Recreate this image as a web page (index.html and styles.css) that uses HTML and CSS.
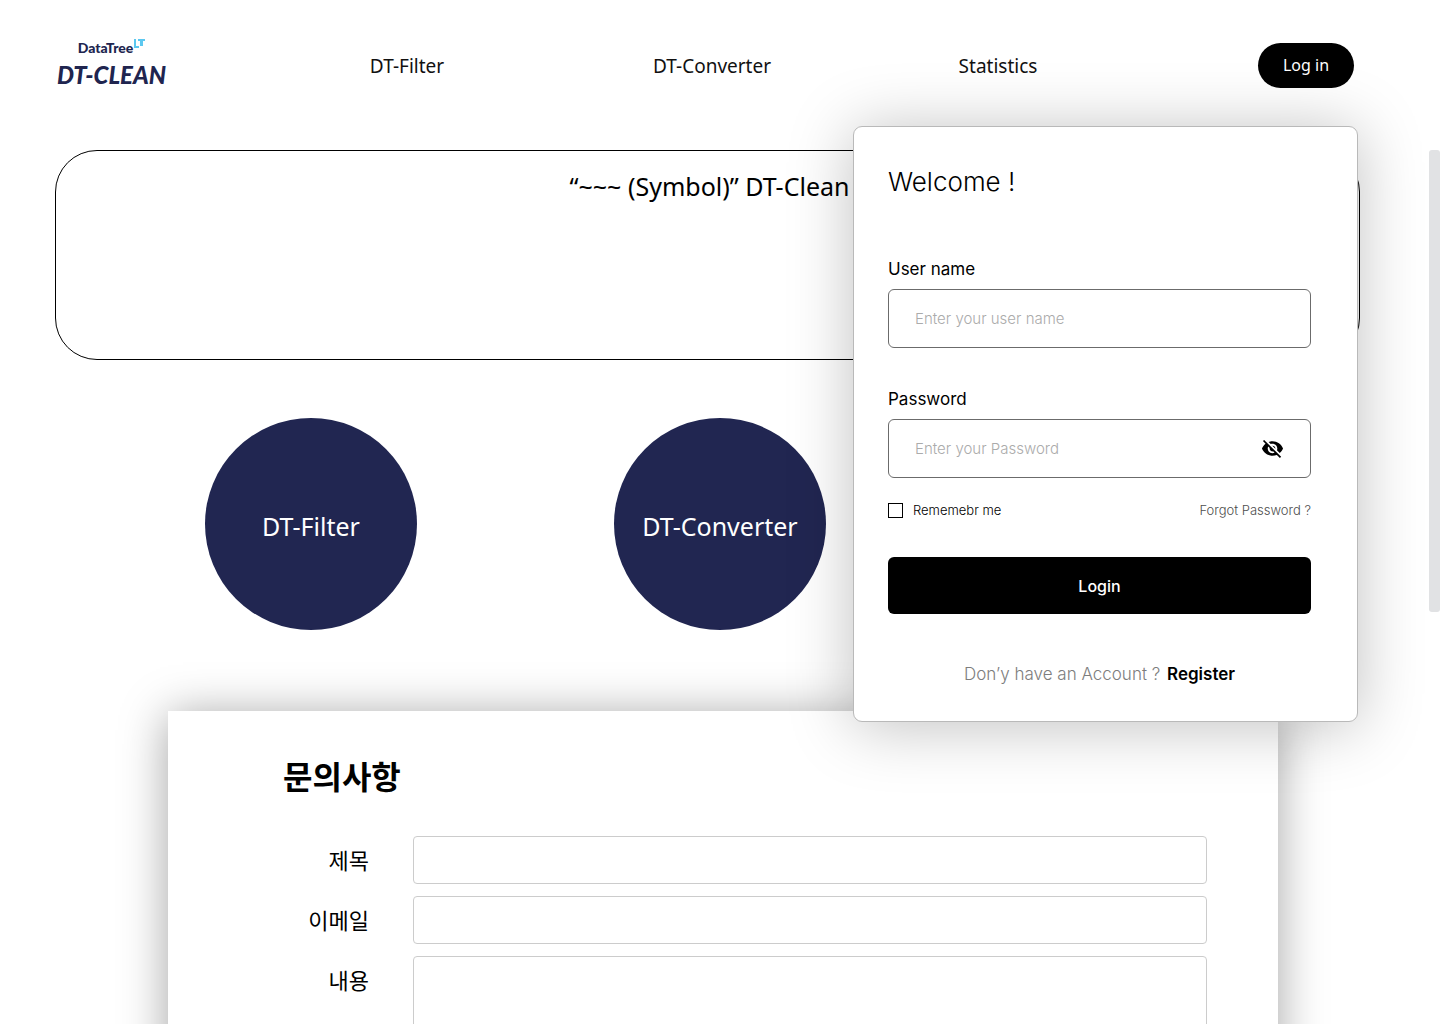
FILE: index.html
```html
<!DOCTYPE html>
<html lang="ko">
<head>
<meta charset="utf-8">
<meta name="viewport" content="width=device-width, initial-scale=1">
<title>DT-Clean</title>
<link rel="stylesheet" href="styles.css">
</head>
<body>
<div class="page">
  <header class="header">
    <a class="logo" href="#">
      <span class="logo-top">DataTree<svg class="logo-mark" width="11" height="10" viewBox="0 0 11 10" aria-hidden="true"><g fill="#5cc8f0"><rect x="0" y="0" width="2" height="9"/><rect x="0" y="7" width="5" height="2"/><rect x="4" y="0" width="7" height="2"/><rect x="6" y="0" width="3" height="7"/></g></svg></span>
      <span class="logo-name">DT-CLEAN</span>
    </a>
    <nav class="nav">
      <a href="#">DT-Filter</a>
      <a href="#">DT-Converter</a>
      <a href="#">Statistics</a>
    </nav>
    <button class="login-pill" type="button">Log in</button>
  </header>

  <main>
    <section class="hero"><h1>“~~~ (Symbol)” DT-Clean</h1></section>

    <section class="services">
      <a class="service" href="#">DT-Filter</a>
      <a class="service" href="#">DT-Converter</a>
    </section>

    <form class="inquiry">
      <h2>문의사항</h2>
      <div class="inquiry-row">
        <label for="subject">제목</label>
        <input id="subject" type="text">
      </div>
      <div class="inquiry-row">
        <label for="email">이메일</label>
        <input id="email" type="email">
      </div>
      <div class="inquiry-row">
        <label for="body">내용</label>
        <textarea id="body" rows="8"></textarea>
      </div>
    </form>
  </main>

  <form class="modal">
    <h2>Welcome !</h2>
    <label class="field-label" for="user">User name</label>
    <div class="field">
      <input id="user" type="text" placeholder="Enter your user name">
    </div>
    <label class="field-label" for="password">Password</label>
    <div class="field">
      <input id="password" type="password" placeholder="Enter your Password">
      <button class="reveal" type="button" aria-label="Show password">
        <svg width="23" height="23" viewBox="0 0 24 24" fill="#000"><path d="M12 7c2.760 0 5 2.240 5 5 0 .65-.13 1.260-.36 1.830l2.920 2.920c1.510-1.260 2.700-2.890 3.430-4.750-1.730-4.390-6-7.500-11-7.500-1.400 0-2.740.25-3.980.7l2.160 2.160C10.740 7.130 11.350 7 12 7zM2 4.270l2.280 2.280.46.46C3.080 8.300 1.780 10.020 1 12c1.730 4.390 6 7.500 11 7.500 1.550 0 3.030-.3 4.380-.84l.42.42L19.730 22 21 20.730 3.270 3 2 4.270zM7.530 9.800l1.550 1.550c-.05.21-.08.43-.08.65 0 1.660 1.340 3 3 3 .22 0 .44-.03.65-.08l1.550 1.550c-.67.33-1.410.53-2.200.53-2.760 0-5-2.240-5-5 0-.79.2-1.530.53-2.200zm4.310-.78l3.150 3.150.02-.16c0-1.660-1.340-3-3-3l-.17.01z"/></svg>
      </button>
    </div>
    <div class="options">
      <label class="remember"><input type="checkbox">Rememebr me</label>
      <a href="#">Forgot Password ?</a>
    </div>
    <button class="submit" type="submit">Login</button>
    <p class="register">Don’y have an Account ? <a href="#">Register</a></p>
  </form>

  <div class="scroll-thumb"></div>
</div>
</body>
</html>
```
FILE: styles.css
```css
* {
  box-sizing: border-box;
}

body {
  margin: 0;
  background: #fff;
  color: #000;
  font-family: "Noto Sans", "Noto Sans CJK KR", sans-serif;
}

a {
  color: inherit;
  text-decoration: none;
}

h1,
h2,
p {
  margin: 0;
}

button,
input,
textarea {
  font: inherit;
}

button {
  border: 0;
  cursor: pointer;
}

.page {
  position: relative;
  height: 100vh;
  overflow: hidden;
}

/* Header */
.header {
  display: flex;
  align-items: center;
  padding: 38px 86px 0 55px;
}

.logo {
  display: flex;
  flex-direction: column;
  align-items: center;
  width: 113px;
  color: #20254f;
}

.logo-top {
  display: flex;
  font: 900 14px/20px Lato, sans-serif;
}

.logo-mark {
  margin: 1px 0 0 1px;
}

.logo-name {
  font: italic 900 24px/34px Lato, sans-serif;
  white-space: nowrap;
}

.nav {
  flex: 1;
  display: grid;
  grid-template-columns: 304fr 306fr 266fr;
  margin: 0 127px 0 87px;
  padding-top: 2px;
  color: #111;
  font-size: 19px;
  line-height: 28px;
  text-align: center;
}

.login-pill {
  width: 96px;
  height: 45px;
  padding: 0;
  border-radius: 23px;
  background: #000;
  color: #fff;
  font-size: 16px;
}

/* Hero */
.hero {
  height: 210px;
  margin: 58px 80px 0 55px;
  padding: 17px 0 0 4px;
  border: 1px solid #000;
  border-radius: 42px;
  text-align: center;
}

.hero h1 {
  font-size: 25px;
  font-weight: 400;
  line-height: 36px;
}

/* Service circles */
.services {
  display: grid;
  grid-template-columns: repeat(3, 212px);
  justify-content: space-between;
  padding: 58px 205px 0;
}

.service {
  display: flex;
  align-items: center;
  justify-content: center;
  height: 212px;
  padding-top: 4px;
  border-radius: 50%;
  background: #212651;
  color: #fff;
  font-size: 25px;
}

/* Inquiry form */
.inquiry {
  display: flex;
  flex-direction: column;
  gap: 12px;
  margin: 81px 162px 0 168px;
  padding: 40px 71px 60px 115px;
  background: #fff;
  box-shadow: 0 4px 44px rgba(0, 0, 0, 0.36);
  font-family: "Noto Sans CJK KR", sans-serif;
}

.inquiry h2 {
  margin-bottom: 25px;
  font-size: 32px;
  font-weight: 700;
  line-height: 48px;
}

.inquiry-row {
  display: grid;
  grid-template-columns: 86px 1fr;
  column-gap: 44px;
}

.inquiry-row label {
  font-size: 22px;
  line-height: 46px;
  text-align: right;
}

.inquiry-row input,
.inquiry-row textarea {
  width: 100%;
  min-height: 48px;
  padding: 0 16px;
  border: 1px solid #ccc;
  border-radius: 4px;
  background: #fff;
  resize: none;
}

/* Login dialog */
.modal {
  position: absolute;
  top: 126px;
  right: 82px;
  display: flex;
  flex-direction: column;
  width: 505px;
  padding: 35px 46px 35px 34px;
  border: 1px solid #b9b9b9;
  border-radius: 9px;
  background: #fff;
  box-shadow: 0 4px 64px rgba(0, 0, 0, 0.25);
  font-family: Inter, sans-serif;
}

.modal h2 {
  margin-bottom: 55px;
  font-size: 26px;
  font-weight: 300;
  line-height: 40px;
}

.field-label {
  margin-bottom: 8px;
  font-size: 17px;
  line-height: 24px;
}

.field {
  display: flex;
  align-items: center;
  height: 59px;
  margin-bottom: 39px;
  padding: 0 26px;
  border: 1px solid #6b6b6b;
  border-radius: 6px;
}

.field input {
  flex: 1;
  min-width: 0;
  padding: 0;
  border: 0;
  outline: 0;
  background: none;
  font-size: 15px;
  font-weight: 300;
}

.field input::placeholder {
  color: #ababab;
  opacity: 1;
}

.reveal {
  display: flex;
  padding: 0;
  background: none;
}

.options {
  display: flex;
  align-items: center;
  justify-content: space-between;
  margin-top: -17px;
  font-size: 13px;
  font-weight: 300;
  line-height: 20px;
}

.options a {
  color: #4d4d4d;
}

.remember {
  display: flex;
  align-items: center;
  gap: 10px;
}

.remember input {
  appearance: none;
  width: 15px;
  height: 15px;
  margin: 0;
  border: 1px solid #000;
}

.submit {
  height: 57px;
  margin: 37px 0 48px;
  border-radius: 6px;
  background: #000;
  color: #fff;
  font-size: 16px;
  font-weight: 500;
}

.register {
  color: #7d7d7d;
  font-size: 17px;
  font-weight: 300;
  line-height: 24px;
  text-align: center;
}

.register a {
  margin-left: 2px;
  color: #000;
  font-weight: 600;
}

.scroll-thumb {
  position: absolute;
  top: 150px;
  right: 0;
  width: 11px;
  height: 462px;
  border-radius: 3px;
  background: #e1e2e4;
}
```
